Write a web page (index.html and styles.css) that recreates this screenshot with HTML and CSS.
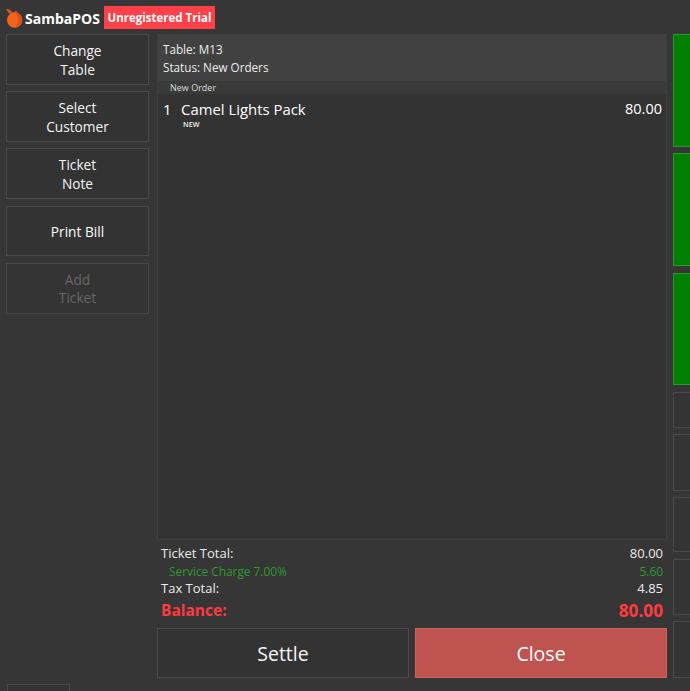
FILE: index.html
```html
<!DOCTYPE html>
<html lang="en">
<head>
<meta charset="utf-8">
<title>SambaPOS</title>
<link rel="stylesheet" href="styles.css">
</head>
<body>
<header class="topbar">
  <svg class="logo" width="18" height="20" viewBox="0 0 18 20" aria-hidden="true">
    <path d="M0 1 L4 1.5 L7.5 6 L3 5.5 Z" fill="#d9541e"/>
    <path d="M7.5 5.5 L10 2.5 L11 3.5 L9.5 6 Z" fill="#d9541e"/>
    <ellipse cx="8.6" cy="12" rx="7.6" ry="7.8" fill="#f0641e"/>
    <path d="M8.6 4.2a7.6 7.8 0 0 1 0 15.6a10 10 0 0 0 0-15.6z" fill="#e0500f"/>
  </svg>
  <span class="brand">SambaPOS</span>
  <span class="trial">Unregistered Trial</span>
</header>
<main class="layout">
  <nav class="actions">
    <button class="btn action">Change<br>Table</button>
    <button class="btn action">Select<br>Customer</button>
    <button class="btn action">Ticket<br>Note</button>
    <button class="btn action print">Print Bill</button>
    <button class="btn action disabled">Add<br>Ticket</button>
    <div class="stub"></div>
  </nav>
  <section class="ticket">
    <div class="panel">
      <div class="panel-head">
        <div>Table: M13</div>
        <div>Status: New Orders</div>
      </div>
      <div class="group">New Order</div>
      <div class="order">
        <span class="qty">1</span>
        <span class="name">Camel Lights Pack</span>
        <span class="price">80.00</span>
      </div>
      <div class="tag">NEW</div>
    </div>
    <div class="totals">
      <div class="row"><span>Ticket Total:</span><span>80.00</span></div>
      <div class="row service"><span>Service Charge 7.00%</span><span>5.60</span></div>
      <div class="row"><span>Tax Total:</span><span>4.85</span></div>
      <div class="row balance"><span>Balance:</span><span class="balance-value">80.00</span></div>
    </div>
    <div class="commands">
      <button class="btn command">Settle</button>
      <button class="btn command close">Close</button>
    </div>
  </section>
  <aside class="side">
    <div class="green g1"></div>
    <div class="green g2"></div>
    <div class="green g3"></div>
    <div class="slot s1"></div>
    <div class="slot s2"></div>
    <div class="slot s3"></div>
    <div class="slot s4"></div>
    <div class="slot s5"></div>
  </aside>
</main>
</body>
</html>
```
FILE: styles.css
```css
* { box-sizing: border-box; }
html, body { margin: 0; height: 100%; }
body {
  width: 690px;
  height: 691px;
  overflow: hidden;
  background: #363636;
  color: #f2f2f2;
  font-family: "Open Sans", "Noto Sans", sans-serif;
}
.topbar {
  height: 34px;
  padding: 6px 0 0 6px;
  display: flex;
  align-items: flex-start;
}
.logo { margin-top: 2px; flex: none; }
.brand {
  margin-left: 1px;
  width: 79px;
  font-family: "Open Sans", sans-serif;
  font-weight: 700;
  font-size: 14px;
  line-height: 26px;
  letter-spacing: 0;
  white-space: nowrap;
  color: #fff;
}
.trial {
  height: 23px;
  width: 111px;
  background: #ff4048;
  color: #fff;
  font-weight: 700;
  font-size: 11.5px;
  line-height: 23px;
  text-align: center;
  white-space: nowrap;
}
.layout {
  display: grid;
  grid-template-columns: 143px 510px 40px;
  column-gap: 8px;
  padding-left: 6px;
  height: 657px;
}
.layout > .side { margin-left: -2px; }
.btn {
  display: block;
  font-family: inherit;
  background: #333;
  border: 1px solid #4a4a4a;
  color: #f5f5f5;
  padding: 0;
  text-align: center;
}
.actions {
  display: flex;
  flex-direction: column;
  gap: 6px;
}
.action {
  width: 143px;
  height: 51px;
  font-size: 13.7px;
  line-height: 19px;
}
.print { height: 50px; margin-top: 1px; color: #fff; }
.disabled {
  margin-top: 1px;
  line-height: 18px;
  color: #666;
  border-color: #474747;
  background: #343434;
}
.stub {
  width: 63px;
  height: 20px;
  margin: 364px 0 0 1px;
  border: 1px solid #494949;
  background: #333;
}
.ticket { display: flex; flex-direction: column; min-width: 0; }
.panel {
  height: 506px;
  background: #333;
  border: 1px solid #3f3f3f;
  border-top: 0;
}
.panel-head {
  height: 47px;
  padding: 6px 5px 0;
  background: #414141;
  font-size: 11.7px;
  line-height: 18px;
  color: #ececec;
}
.group {
  height: 13px;
  padding-left: 12px;
  background: #3a3a3a;
  font-size: 9px;
  line-height: 13px;
  color: #dcdcdc;
}
.order {
  display: flex;
  padding: 4px 4px 0 5px;
  height: 26px;
  font-size: 14.9px;
  line-height: 22px;
  color: #fff;
}
.qty { width: 18px; }
.name { flex: 1; }
.price { font-size: 14.5px; }
.tag {
  margin-left: 25px;
  font-size: 7.2px;
  line-height: 9px;
  font-weight: 600;
  color: #eee;
}
.totals { padding: 5px 4px 0 4px; }
.row {
  display: flex;
  justify-content: space-between;
  font-size: 13px;
  line-height: 17.5px;
  color: #eaeaea;
}
.service {
  font-size: 11.85px;
  padding-left: 8px;
  color: #2f9a2f;
}
.balance {
  font-size: 15.5px;
  line-height: 25px;
  font-weight: 700;
  color: #ff3a40;
}
.balance-value { font-size: 17.2px; }
.commands {
  display: grid;
  grid-template-columns: 252px 252px;
  column-gap: 6px;
  margin-top: 5px;
}
.command {
  height: 50px;
  padding-top: 2px;
  font-size: 19.5px;
  line-height: 24px;
}
.close {
  background: #bf5350;
  border-color: #d0605c;
  color: #fff;
}
.side {
  display: flex;
  flex-direction: column;
  gap: 6px;
  width: 40px;
}
.green {
  background: #008000;
  border: 1px solid #2a9a2a;
  border-right: 0;
}
.g1 { height: 113px; }
.g2 { height: 113px; }
.g3 { height: 112px; margin-top: 1px; }
.slot {
  background: #343434;
  border: 1px solid #4a4a4a;
  border-right: 0;
}
.s1 { height: 36px; margin-top: 1px; }
.s2 { height: 57px; }
.s3 { height: 55px; }
.s4 { height: 56px; margin-top: 1px; }
.s5 { height: 57px; }
```
